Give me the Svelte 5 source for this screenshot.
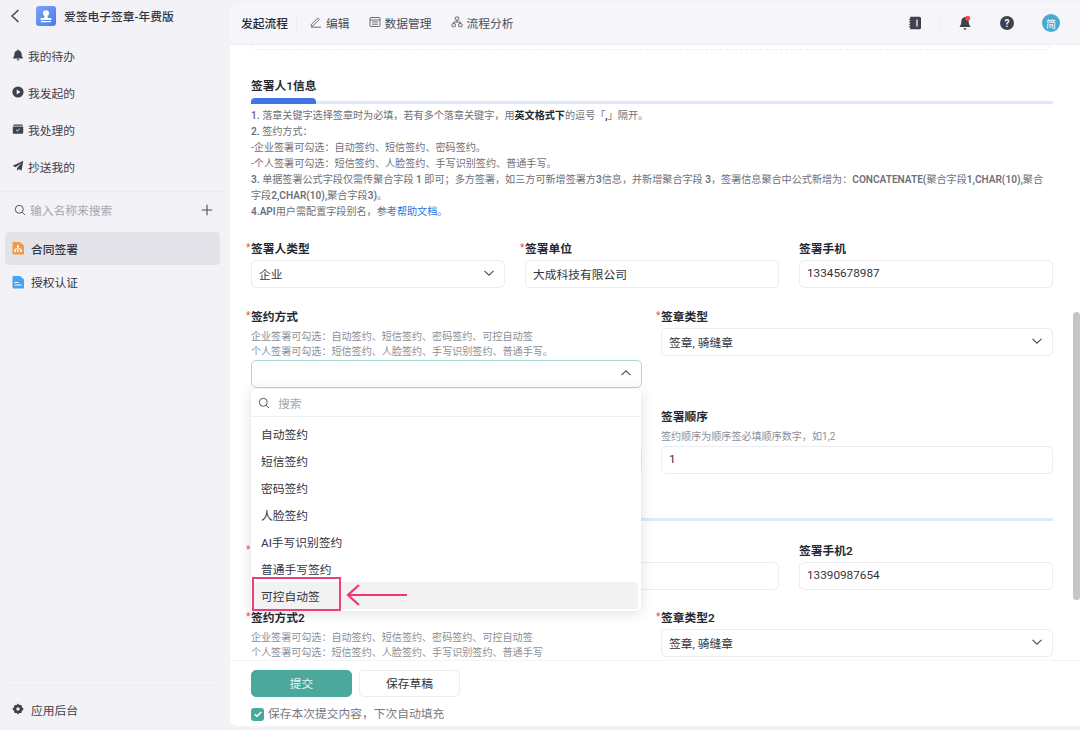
<script lang="ts">
  const nav = [
    { label: "我的待办", icon: "bell" },
    { label: "我发起的", icon: "play" },
    { label: "我处理的", icon: "box" },
    { label: "抄送我的", icon: "send" },
  ];
  const options = ["自动签约", "短信签约", "密码签约", "人脸签约", "AI手写识别签约", "普通手写签约", "可控自动签"];
  const companyHint = "企业签署可勾选：自动签约、短信签约、密码签约、可控自动签";
</script>

{#snippet chevron(up = false)}
  <svg class="chev" viewBox="0 0 12 12" width="12" height="12">
    <path d={up ? "M1.5 8.2 6 3.8l4.5 4.4" : "M1.5 3.8 6 8.2l4.5-4.4"} fill="none" stroke="#4a4d57" stroke-width="1.1" />
  </svg>
{/snippet}

<div class="app">
  <aside class="sidebar">
    <div class="brand">
      <svg class="back" viewBox="0 0 12 16" width="12" height="16">
        <path d="M9.5 2 3 8l6.5 6" fill="none" stroke="#3d3f48" stroke-width="1.4" />
      </svg>
      <span class="logo">
        <svg viewBox="0 0 20 20" width="20" height="20">
          <circle cx="10" cy="7.2" r="3" fill="#fff" />
          <path d="M8.6 10h2.8l.5 2h2.600c.6 0 1 .4 1 1v1H4.500v-1c0-.6.4-1 1-1h2.600z" fill="#fff" />
          <rect x="5" y="15" width="10" height="1.200" fill="#fff" />
        </svg>
      </span>
      <span class="brand-name">爱签电子签章-年费版</span>
    </div>

    <nav class="nav">
      {#each nav as item}
        <div class="nav-item">
          <svg viewBox="0 0 12 12" width="12" height="12">
            {#if item.icon === "bell"}
              <path d="M6 .6c.5 0 .8.3.8.8 1.800.4 2.800 1.800 2.800 3.600 0 1.800.4 2.700 1.200 3.500v.9H1.200v-.9C2 7.700 2.400 6.800 2.400 5c0-1.800 1-3.200 2.800-3.600 0-.5.3-.8.8-.8zM4.800 10.200h2.400a1.200 1.200 0 0 1-2.400 0z" fill="#3f424c" />
            {:else if item.icon === "play"}
              <circle cx="6" cy="6" r="5.600" fill="#3f424c" />
              <path d="M4.700 3.500 8.500 6 4.700 8.500z" fill="#f2f2f7" />
            {:else if item.icon === "box"}
              <path d="M1.500 1.500h9v1.300h-9zM.8 3.500h10.400v6.300c0 .5-.4.9-.9.9H1.700c-.5 0-.9-.4-.9-.9z" fill="#3f424c" />
              <path d="M4 6.800 5.400 8l2.500-2.300" fill="none" stroke="#f2f2f7" stroke-width=".9" />
            {:else}
              <path d="M11.300.8 9.500 10.700 6.600 9 5 11V8.200L9.300 3 3.600 7.300.7 5.800z" fill="#3f424c" />
            {/if}
          </svg>
          <span>{item.label}</span>
        </div>
      {/each}
    </nav>

    <div class="side-search">
      <svg viewBox="0 0 12 12" width="12" height="12">
        <circle cx="5.300" cy="5.300" r="4" fill="none" stroke="#555862" stroke-width="1" />
        <path d="m8.300 8.300 2.700 2.700" stroke="#555862" stroke-width="1" />
      </svg>
      <span class="side-placeholder">输入名称来搜索</span>
      <svg class="plus" viewBox="0 0 12 12" width="12" height="12">
        <path d="M6 .8v10.400M.8 6h10.400" stroke="#4a4d57" stroke-width="1.100" />
      </svg>
    </div>

    <div class="app-item active">
      <svg viewBox="0 0 12 14" width="12" height="14">
        <path d="M1.500 1h6.500L12 4.500v8a1 1 0 0 1-1 1H1.500a1 1 0 0 1-1-1v-10.500a1 1 0 0 1 1-1z" fill="#f39a4a" />
        <path d="M6 5v2.800M3 10V8h6v2" fill="none" stroke="#fff" stroke-width="1" />
        <rect x="5" y="4.500" width="2" height="1.800" fill="#fff" />
        <rect x="2.200" y="9.300" width="1.700" height="1.700" fill="#fff" />
        <rect x="5.100" y="9.300" width="1.700" height="1.700" fill="#fff" />
        <rect x="8.100" y="9.300" width="1.700" height="1.700" fill="#fff" />
      </svg>
      <span>合同签署</span>
    </div>
    <div class="app-item">
      <svg viewBox="0 0 12 14" width="12" height="14">
        <path d="M1.500 1h6.500L12 4.500v8a1 1 0 0 1-1 1H1.500a1 1 0 0 1-1-1v-10.500a1 1 0 0 1 1-1z" fill="#45a5f3" />
        <path d="M2.500 7.500h4M2.500 10h7" stroke="#fff" stroke-width="1.100" />
      </svg>
      <span>授权认证</span>
    </div>

    <div class="side-foot">
      <svg viewBox="0 0 12 12" width="12" height="12">
        <path fill-rule="evenodd" d="M6 .4 7.300 2.100l2.100-.2.500 2.100L11.700 6l-1.800 2-.5 2.100-2.100-.2L6 11.600 4.700 9.900l-2.100.2L2.100 8 .3 6l1.800-2 .5-2.100 2.100.2zM6 4.300a1.700 1.700 0 1 0 0 3.400 1.700 1.700 0 0 0 0-3.400z" fill="#3f424c" />
      </svg>
      <span>应用后台</span>
    </div>
  </aside>

  <main class="panel">
    <header class="topbar">
      <div class="tab current">发起流程</div>
      <span class="tab-sep"></span>
      <div class="tab">
        <svg viewBox="0 0 12 12" width="12" height="12">
          <path d="M1.500 8.300 7.800 2l1.500 1.500L3 9.800l-1.900.4zM1 11.200h10" fill="none" stroke="#4a4d57" stroke-width=".8" />
        </svg>
        编辑
      </div>
      <div class="tab">
        <svg viewBox="0 0 12 12" width="12" height="12">
          <rect x="1" y="1.500" width="10" height="9" rx="1" fill="none" stroke="#4a4d57" stroke-width=".8" />
          <path d="M1 4h10M3 6h6M3 8.200h6" fill="none" stroke="#4a4d57" stroke-width=".8" />
        </svg>
        数据管理
      </div>
      <div class="tab">
        <svg viewBox="0 0 12 12" width="12" height="12">
          <g fill="none" stroke="#4a4d57" stroke-width=".8">
            <rect x="4.300" y="1" width="3.400" height="3" rx=".6" />
            <rect x="1" y="7.700" width="3.400" height="3" rx=".6" />
            <rect x="7.600" y="7.700" width="3.400" height="3" rx=".6" />
            <path d="M6 4v2M2.700 7.700V6h6.600v1.700" />
          </g>
        </svg>
        流程分析
      </div>

      <div class="tools">
        <svg class="tool" viewBox="0 0 14 14" width="14" height="14">
          <path d="M2.200 .8h9.300a1.500 1.500 0 0 1 1.500 1.500v9.400a1.500 1.500 0 0 1-1.500 1.500H2.200z" fill="#3f424c" />
          <path d="M1 3.200h2M1 5.700h2M1 8.300h2M1 10.800h2" stroke="#3f424c" stroke-width="1" />
          <rect x="8.300" y="3.500" width="1.300" height="7" fill="#f6f6fa" />
        </svg>
        <span class="tool-sep"></span>
        <svg class="tool" viewBox="0 0 14 16" width="14" height="16">
          <path d="M7 1.800c.5 0 .8.300.8.800 1.900.4 2.900 1.900 2.900 3.800 0 2.300.5 3.500 1.500 4.500v1H1.800v-1c1-1 1.500-2.200 1.500-4.500 0-1.900 1-3.400 2.900-3.800 0-.5.300-.8.800-.8zM5.500 13.300h3a1.500 1.500 0 0 1-3 0z" fill="#3f424c" />
          <circle cx="9.700" cy="3.300" r="2.500" fill="#ee4d4a" />
        </svg>
        <span class="help">?</span>
        <span class="avatar">简</span>
      </div>
    </header>

    <div class="form-wrap">
      <div class="form">
        <div class="prev-end"></div>

        <h2 class="section-title">签署人1信息</h2>
        <div class="section-bar"><span></span></div>
        <div class="notes">
          <p><em>1.</em> 落章关键字选择签章时为必填，若有多个落章关键字，用<b>英文格式下</b>的逗号「<b>,</b>」隔开。</p>
          <p><em>2.</em> 签约方式：</p>
          <p>-企业签署可勾选：自动签约、短信签约、密码签约。</p>
          <p>-个人签署可勾选：短信签约、人脸签约、手写识别签约、普通手写。</p>
          <p><em>3.</em> 单据签署公式字段仅需传聚合字段 <em>1</em> 即可；多方签署，如三方可新增签署方<em>3</em>信息，并新增聚合字段 <em>3</em>，签署信息聚合中公式新增为：<em>CONCATENATE(</em>聚合字段<em>1,CHAR(10),</em>聚合</p>
          <p>字段<em>2,CHAR(10),</em>聚合字段<em>3)</em>。</p>
          <p><em>4.API</em>用户需配置字段别名，参考<a href="#help">帮助文档</a>。</p>
        </div>

        <div class="row three first-row">
          <div class="field">
            <span class="label"><i>*</i>签署人类型</span>
            <div class="input">企业{@render chevron()}</div>
          </div>
          <div class="field">
            <span class="label"><i>*</i>签署单位</span>
            <div class="input">大成科技有限公司</div>
          </div>
          <div class="field">
            <span class="label">签署手机</span>
            <div class="input">13345678987</div>
          </div>
        </div>

        <div class="row two second-row">
          <div class="field">
            <span class="label"><i>*</i>签约方式</span>
            <span class="hint">{companyHint}</span>
            <span class="hint">个人签署可勾选：短信签约、人脸签约、手写识别签约、普通手写。</span>
            <div class="input open">{@render chevron(true)}</div>
          </div>
          <div class="field">
            <span class="label"><i>*</i>签章类型</span>
            <div class="input">签章, 骑缝章{@render chevron()}</div>
          </div>
        </div>

        <div class="row two third-row">
          <div class="field">
            <span class="label">&nbsp;</span>
            <span class="hint">&nbsp;</span>
            <div class="input"></div>
          </div>
          <div class="field">
            <span class="label">签署顺序</span>
            <span class="hint">签约顺序为顺序签必填顺序数字，如1,2</span>
            <div class="input">1</div>
          </div>
        </div>

        <div class="section-bar second-bar"></div>

        <div class="row three fourth-row">
          <div class="field">
            <span class="label"><i>*</i>&nbsp;</span>
            <div class="input"></div>
          </div>
          <div class="field">
            <span class="label">&nbsp;</span>
            <div class="input"></div>
          </div>
          <div class="field">
            <span class="label">签署手机2</span>
            <div class="input">13390987654</div>
          </div>
        </div>

        <div class="row two fifth-row">
          <div class="field">
            <span class="label"><i>*</i>签约方式2</span>
            <span class="hint">{companyHint}</span>
            <span class="hint">个人签署可勾选：短信签约、人脸签约、手写识别签约、普通手写</span>
          </div>
          <div class="field">
            <span class="label"><i>*</i>签章类型2</span>
            <div class="input">签章, 骑缝章{@render chevron()}</div>
          </div>
        </div>

        <div class="dropdown">
          <div class="dd-search">
            <svg viewBox="0 0 12 12" width="12" height="12">
              <circle cx="5.300" cy="5.300" r="4" fill="none" stroke="#555862" stroke-width="1" />
              <path d="m8.300 8.300 2.700 2.700" stroke="#555862" stroke-width="1" />
            </svg>
            <span>搜索</span>
          </div>
          <ul>
            {#each options as opt, i}
              <li class:hover={i === options.length - 1}>{opt}</li>
            {/each}
          </ul>
        </div>

        <div class="callout"></div>
        <svg class="arrow" viewBox="0 0 62 22" width="62" height="22">
          <path d="M61 11H2M13 1 2 11l11 10" fill="none" stroke="#f0356f" stroke-width="2.200" />
        </svg>
      </div>

      <div class="scrollbar"></div>
    </div>

    <footer class="footer">
      <div class="buttons">
        <button class="btn primary">提交</button>
        <button class="btn">保存草稿</button>
      </div>
      <div class="remember">
        <span class="check">
          <svg viewBox="0 0 12 12" width="12" height="12">
            <path d="M2.800 6.200 5 8.300l4.200-4.400" fill="none" stroke="#fff" stroke-width="1.500" />
          </svg>
        </span>
        <span class="remember-text">保存本次提交内容，下次自动填充</span>
      </div>
    </footer>
  </main>
</div>

<style>
  :global(body) {
    margin: 0;
    background: #f2f2f7;
  }

  .app {
    display: flex;
    width: 1080px;
    height: 730px;
    overflow: hidden;
    background: #f2f2f7;
    color: #2c2e36;
    font-family: "Roboto", "Noto Sans CJK SC", sans-serif;
    font-size: 11.75px;
  }

  /* sidebar */
  .sidebar {
    width: 230px;
    flex: none;
    display: flex;
    flex-direction: column;
    box-sizing: border-box;
    height: 726px;
  }

  .brand {
    display: flex;
    align-items: center;
    box-sizing: border-box;
    height: 32px;
    padding: 0 0 1px 9px;
  }

  .logo {
    display: flex;
    width: 20px;
    height: 20px;
    margin-left: 15px;
    border-radius: 3px;
    background: linear-gradient(135deg, #7ba3f6, #4a7cea);
  }

  .brand-name {
    margin-left: 8px;
    padding-bottom: 1px;
    font-weight: 500;
    color: #33353d;
  }

  .nav {
    padding: 5px 0 6px;
    border-bottom: 1px solid #ececf1;
    margin-right: 6px;
  }

  .nav-item {
    display: flex;
    align-items: center;
    gap: 4px;
    box-sizing: border-box;
    height: 37px;
    padding: 0 0 1px 12px;
    color: #3f424c;
  }

  .side-search {
    display: flex;
    align-items: center;
    box-sizing: border-box;
    height: 40px;
    padding: 0 17px 5px 14px;
    gap: 4px;
  }

  .side-placeholder {
    flex: 1;
    color: #a5a7ae;
  }

  .app-item {
    display: flex;
    align-items: center;
    gap: 7px;
    box-sizing: border-box;
    height: 33px;
    margin: 0 10px 0 5px;
    padding: 0 0 2px 7px;
    border-radius: 4px;
    color: #33353d;
  }

  .app-item.active {
    background: #e3e3e9;
    margin-bottom: 1px;
    padding-bottom: 1px;
    font-weight: 500;
  }

  .side-foot {
    margin: auto 10px 0 5px;
    display: flex;
    align-items: center;
    gap: 7px;
    box-sizing: border-box;
    height: 41px;
    padding: 6px 0 0 7px;
    border-top: 1px solid #ececf1;
    color: #3f424c;
  }

  /* main panel */
  .panel {
    flex: 1;
    height: 724px;
    margin-top: 2px;
    display: flex;
    flex-direction: column;
    background: #fff;
    border-radius: 8px 0 0 8px;
    overflow: hidden;
    min-width: 0;
  }

  .topbar {
    display: flex;
    align-items: center;
    flex: none;
    height: 42px;
    padding: 0 20px 0 11px;
    background: #f6f6fa;
    border-bottom: 1px solid #eeeef3;
    color: #4a4d57;
  }

  .tab {
    display: flex;
    align-items: center;
    gap: 4px;
    margin-right: 19px;
    padding-bottom: 2px;
  }

  .tab.current {
    font-weight: 500;
    color: #26282f;
    margin-right: 8px;
  }

  .tab-sep {
    width: 1px;
    height: 14px;
    margin-right: 13px;
    background: #ececf1;
  }

  .tools {
    margin-left: auto;
    display: flex;
    align-items: center;
  }

  .tool-sep {
    width: 1px;
    height: 14px;
    margin: 0 17px 0 18px;
    background: #ececf1;
  }

  .help {
    display: flex;
    align-items: center;
    justify-content: center;
    width: 14px;
    height: 14px;
    margin-left: 28px;
    border-radius: 50%;
    background: #3f424c;
    color: #f6f6fa;
    font-weight: 700;
    font-size: 10px;
  }

  .avatar {
    display: flex;
    align-items: center;
    justify-content: center;
    width: 18px;
    height: 18px;
    margin-left: 28px;
    border-radius: 50%;
    background: #49a9cf;
    color: #fff;
    font-size: 10px;
  }

  .form-wrap {
    position: relative;
    flex: 1;
    min-height: 0;
    overflow: hidden;
  }

  .form {
    position: relative;
    padding: 0 27px 0 21px;
  }

  .prev-end {
    height: 4px;
    margin-right: 3px;
    border: 1px dashed #ececf1;
    border-top: 0;
    border-radius: 0 0 6px 6px;
  }

  .section-title {
    margin: 28px 0 0;
    font-size: 11.75px;
    line-height: 16px;
    font-weight: 600;
    color: #26282f;
  }

  .section-bar {
    position: relative;
    height: 3px;
    margin-top: 7px;
    background: #dfe8fa;
  }

  .section-bar span {
    position: absolute;
    left: 0;
    bottom: 0;
    width: 65px;
    height: 6.500px;
    border-radius: 4px 4px 0 0;
    background: #3f76e4;
  }

  .notes {
    margin-top: 4px;
    color: #6f7179;
    font-size: 10.100px;
    line-height: 16px;
  }

  .notes p {
    margin: 0;
    white-space: nowrap;
  }

  .notes b {
    color: #26282f;
    font-weight: 600;
  }

  .notes em {
    font-style: normal;
    font-weight: 600;
  }

  .notes a {
    color: #2f6fe0;
    text-decoration: none;
  }

  .row {
    display: grid;
    align-items: start;
  }

  .three {
    grid-template-columns: repeat(3, 254px);
    gap: 20px;
  }

  .two {
    grid-template-columns: 391px 392px;
    gap: 19px;
  }

  .first-row { margin-top: 21px; }
  .second-row { margin-top: 21px; }
  .third-row { margin-top: 21px; }
  .fourth-row { margin-top: 22px; }
  .fifth-row { margin-top: 20px; }

  .field {
    display: flex;
    flex-direction: column;
    min-width: 0;
  }

  .label {
    position: relative;
    font-size: 11.750px;
    line-height: 16px;
    font-weight: 600;
    color: #26282f;
    margin-bottom: 3px;
  }

  .label i {
    position: absolute;
    left: -5px;
    top: -1px;
    color: #e5534b;
    font-style: normal;
    font-weight: 400;
    font-size: 10px;
  }

  .hint {
    font-size: 10.070px;
    line-height: 15px;
    color: #8c8f98;
  }

  .label + .hint {
    margin-top: 1px;
  }

  .field .hint:last-of-type {
    margin-bottom: 1px;
  }

  .third-row .field .hint:last-of-type {
    margin-bottom: 2px;
  }

  .input {
    display: flex;
    align-items: center;
    justify-content: space-between;
    box-sizing: border-box;
    height: 28px;
    padding: 0 9px 2px 7px;
    border: 1px solid #ececf1;
    border-radius: 5px;
    background: #fff;
    color: #33353d;
  }

  .input.open {
    justify-content: flex-end;
    border-color: #a6dcd5;
  }

  .chev {
    flex: none;
  }

  .section-bar.second-bar {
    margin-top: 44px;
  }

  .dropdown {
    position: absolute;
    left: 21px;
    top: 344px;
    width: 390px;
    height: 222px;
    border-radius: 5px;
    background: #fff;
    box-shadow: 0 2px 14px rgba(30, 32, 45, 0.14);
  }

  .dd-search {
    display: flex;
    align-items: center;
    gap: 8px;
    height: 27px;
    padding-left: 7px;
    border-bottom: 1px solid #f0f0f3;
    color: #a5a7ae;
  }

  .dropdown ul {
    margin: 3px 3px 0;
    padding: 0;
    list-style: none;
  }

  .dropdown li {
    display: flex;
    align-items: center;
    box-sizing: border-box;
    height: 27px;
    padding: 0 0 1px 7px;
    border-radius: 3px;
    color: #33353d;
  }

  .dropdown li.hover {
    background: #f2f2f3;
  }

  .callout {
    position: absolute;
    left: 22px;
    top: 532px;
    width: 85px;
    height: 30px;
    border: 2px solid #ef3f78;
  }

  .arrow {
    position: absolute;
    left: 116px;
    top: 539px;
  }

  .scrollbar {
    position: absolute;
    right: 0;
    top: 267px;
    width: 7px;
    height: 288px;
    border-radius: 4px;
    background: #c4c4c9;
  }

  .footer {
    flex: none;
    height: 66px;
    padding: 9px 0 0 21px;
    box-sizing: border-box;
    border-top: 1px solid #f3f3f5;
    background: #fff;
  }

  .buttons {
    display: flex;
    gap: 7px;
  }

  .btn {
    width: 101px;
    height: 27px;
    padding: 0 0 2px;
    border: 1px solid #ececf1;
    border-radius: 5px;
    background: #fff;
    color: #33353d;
    font: inherit;
  }

  .btn.primary {
    border-color: #4ba99b;
    background: #4ba99b;
    color: #e6f4f1;
  }

  .remember {
    display: flex;
    align-items: center;
    gap: 4px;
    margin-top: 7px;
    color: #777a83;
  }

  .remember-text {
    padding-bottom: 3px;
  }

  .check {
    display: flex;
    align-items: center;
    justify-content: center;
    width: 13px;
    height: 13px;
    border-radius: 3px;
    background: #4ba99b;
  }
</style>
